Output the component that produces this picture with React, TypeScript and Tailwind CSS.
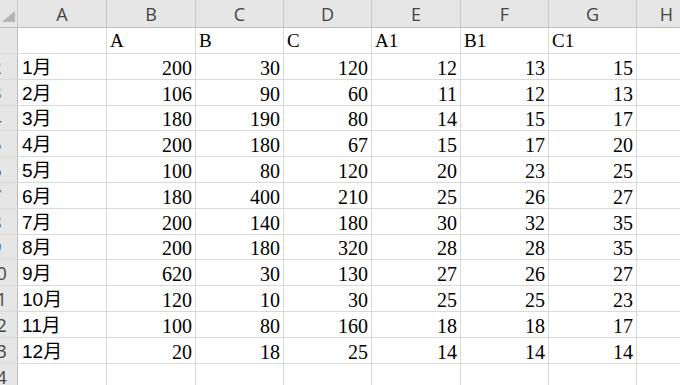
const columns = ['A', 'B', 'C', 'D', 'E', 'F', 'G', 'H'];

// widths include the 1px right grid line
const colWidths = ['w-[89px]', 'w-[89px]', 'w-[88px]', 'w-[88px]', 'w-[89px]', 'w-[88px]', 'w-[88px]', 'w-[60px]'];

// row heights include the 1px bottom grid line
const rowHeights = [
  'h-[26px]', 'h-[26px]', 'h-[26px]', 'h-[25px]', 'h-[26px]', 'h-[26px]', 'h-[26px]',
  'h-[26px]', 'h-[25px]', 'h-[26px]', 'h-[26px]', 'h-[26px]', 'h-[26px]', 'h-[26px]',
];

const data: (string | number)[][] = [
  ['', 'A', 'B', 'C', 'A1', 'B1', 'C1'],
  ['1月', 200, 30, 120, 12, 13, 15],
  ['2月', 106, 90, 60, 11, 12, 13],
  ['3月', 180, 190, 80, 14, 15, 17],
  ['4月', 200, 180, 67, 15, 17, 20],
  ['5月', 100, 80, 120, 20, 23, 25],
  ['6月', 180, 400, 210, 25, 26, 27],
  ['7月', 200, 140, 180, 30, 32, 35],
  ['8月', 200, 180, 320, 28, 28, 35],
  ['9月', 620, 30, 130, 27, 26, 27],
  ['10月', 120, 10, 30, 25, 25, 23],
  ['11月', 100, 80, 160, 18, 18, 17],
  ['12月', 20, 18, 25, 14, 14, 14],
  [],
];

const headFont = { fontFamily: '"Open Sans", "Liberation Sans", sans-serif' };

function Cell({ value, col }: { value: string | number | undefined; col: number }) {
  const base = `${colWidths[col]} shrink-0 border-r border-[#d9d9d9] flex items-end pb-[1px] leading-[20px] whitespace-nowrap overflow-hidden`;
  if (value === undefined || value === '') return <div className={base} />;
  if (typeof value === 'number') {
    return (
      <div className={`${base} justify-end pr-[3px] text-[20px] text-black font-['Liberation_Serif',serif]`}>
        {value}
      </div>
    );
  }
  if (col === 0) {
    return (
      <div className={`${base} pl-[4px] text-[19px] text-black font-['Liberation_Sans','Noto_Sans_CJK_SC',sans-serif]`}>
        {value}
      </div>
    );
  }
  return (
    <div className={`${base} pl-[3px] pb-[2px] text-[19px] text-black font-['Liberation_Serif',serif]`}>
      {value}
    </div>
  );
}

export default function App() {
  return (
    <div className="w-[680px] h-[385px] overflow-hidden bg-white">
      {/* column headers */}
      <div className="flex h-[28px] bg-[#e6e6e6] border-b border-[#bdbdbd]">
        <div className="w-[18px] shrink-0 border-r border-[#c6c6c6] flex items-end justify-end pr-[2px] pb-[5px]">
          <svg width="13" height="11" viewBox="0 0 13 11">
            <polygon points="13,0 13,11 0,11" fill="#b4b4b4" />
          </svg>
        </div>
        {columns.map((c, i) => (
          <div
            key={c}
            style={headFont}
            className={`${colWidths[i]} shrink-0 border-r border-[#c6c6c6] flex items-center justify-center text-[18px] leading-none text-[#444]`}
          >
            {c}
          </div>
        ))}
      </div>

      {/* rows */}
      {data.map((row, r) => (
        <div key={r} className={`flex ${rowHeights[r]} border-b border-[#d9d9d9]`}>
          <div className="w-[18px] shrink-0 overflow-hidden bg-[#e6e6e6] border-r border-[#bdbdbd]">
            <div
              style={headFont}
              className="w-[41px] -ml-[24px] h-full flex items-center justify-center text-[18px] leading-none text-[#444]"
            >
              {r + 1}
            </div>
          </div>
          {columns.map((_, c) => (
            <Cell key={c} value={row[c]} col={c} />
          ))}
        </div>
      ))}
    </div>
  );
}
